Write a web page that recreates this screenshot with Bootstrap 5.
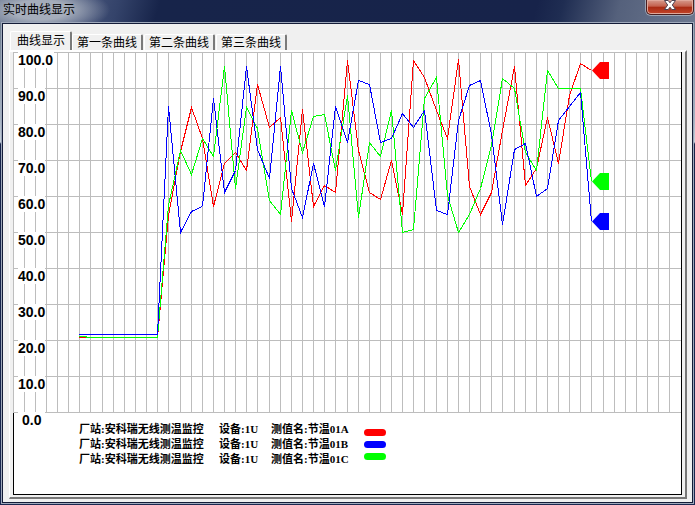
<!DOCTYPE html>
<html lang="zh-CN">
<head>
<meta charset="utf-8">
<meta name="viewport" content="width=device-width, initial-scale=1">
<title>实时曲线显示</title>
<link href="https://cdn.jsdelivr.net/npm/bootstrap@5.3.0/dist/css/bootstrap.min.css" rel="stylesheet">
<style>
body{font:12px/16px "Liberation Sans","Noto Sans CJK SC",sans-serif;color:#000;background:#17244a}
.win{background:linear-gradient(#5d6d80,#a9b5c4 120px,#c6d0da 142px,#17244a 144px,#1a2850)}
.titlebar{height:23px;padding-left:3px;background:
 radial-gradient(ellipse 70px 24px at 40px 10px,#a5adbb 40%,#a5adbb00 100%),
 linear-gradient(105deg,#5b6a86 0,#46547a 80px,#34436a 115px,#17244a 155px,#17234a 520px,#1f2d52 545px,#55617c 600px,#6c7890 100%)}
.titlebar h1{font-size:12px;line-height:20px}
.close-btn{width:48px;height:15px;margin-right:1px;border:1px solid #4b1f20;border-top:0;border-radius:0 0 5px 5px;
 background:linear-gradient(#d59a8c,#c4604c 45%,#a82a12 50%,#c2452b);box-shadow:inset 0 0 0 1px #e0a89a,0 0 0 1px #9da6b5}
.client{margin:0 2px 2px;padding:7px 5px 3px 6px;background:#f0f0f0;border:1px solid #141c38;box-shadow:0 0 0 1px #9fa9bb}
.tabs{padding-left:1px}
.tabs button{height:16px;padding:0 4px;border:0;border-top:1px solid #fff;border-left:1px solid #fff;border-right:2px solid #7a7a7a;
 border-radius:2px 2px 0 0;background:#f0f0f0;color:#000;line-height:16px;margin-right:1px}
.tabs button.active{height:19px;padding:0 5px 0 6px;line-height:17px;margin-right:0}
.sheet{border:2px solid #fff;border-left-width:1px;border-right:2px solid #777;border-bottom:2px solid #777;padding:0 3px 2px 3px;background:#f0f0f0}
.board{background:#fff;border-bottom:1px solid #000}
.plot{overflow:visible}
.plot text{font:bold 14px "Liberation Sans",sans-serif}
.legend{border-left:1px solid #000;border-right:1px solid #000;padding:9px 0 0 65px;
 font:bold 11px/15px "Liberation Serif","Noto Sans CJK SC",serif}
.legend .site{width:140px}.legend .device{width:52px}.legend .measure{width:93px}
.keys{row-gap:5px;padding-top:7px}
.pill{width:22px;height:7px;border-radius:4px}
.red{background:#f00}.blue{background:#00f}.green{background:#0f0}
</style>
<script src="https://cdn.jsdelivr.net/npm/bootstrap@5.3.0/dist/js/bootstrap.bundle.min.js"></script>
</head>
<body>
<main class="win min-vh-100 d-flex flex-column">
 <header class="titlebar d-flex justify-content-between align-items-start">
  <h1 class="m-0 fw-normal">实时曲线显示</h1>
  <button class="close-btn p-0 d-flex justify-content-center" type="button" aria-label="关闭">
   <svg width="14" height="12" viewBox="0 0 14 12"><path d="M1.500 .5h3.700L7 2.800 8.800.5h3.700L9.300 5l3.200 4.500H8.800L7 7.200 5.200 9.500H1.500L4.700 5z" fill="#fff" stroke="#4c4252"/></svg>
  </button>
 </header>
 <section class="client flex-grow-1 d-flex flex-column">
  <nav class="tabs d-flex align-items-end" role="tablist">
   <button class="active" role="tab" aria-selected="true" type="button">曲线显示</button>
   <button role="tab" type="button">第一条曲线</button>
   <button role="tab" type="button">第二条曲线</button>
   <button role="tab" type="button">第三条曲线</button>
  </nav>
  <div class="sheet flex-grow-1 d-flex flex-column">
   <div class="board flex-grow-1 d-flex flex-column">
    <svg class="plot w-100 d-block" viewBox="0 0 669 361" role="img" aria-label="实时曲线">
     <g id="grid" fill="none" stroke="#bdbdbd" shape-rendering="crispEdges"></g>
     <g id="scale"></g>
     <g id="curves" fill="none" shape-rendering="crispEdges"></g>
     <g id="markers"></g>
    </svg>
    <div class="legend flex-grow-1 d-flex align-items-start">
     <div>
      <div class="d-flex"><span class="site">厂站:安科瑞无线测温监控</span><span class="device">设备:1U</span><span class="measure">测值名:节温01A</span></div>
      <div class="d-flex"><span class="site">厂站:安科瑞无线测温监控</span><span class="device">设备:1U</span><span class="measure">测值名:节温01B</span></div>
      <div class="d-flex"><span class="site">厂站:安科瑞无线测温监控</span><span class="device">设备:1U</span><span class="measure">测值名:节温01C</span></div>
     </div>
     <div class="keys d-grid"><span class="pill red"></span><span class="pill blue"></span><span class="pill green"></span></div>
    </div>
   </div>
  </div>
 </section>
</main>
<script>
const px = i => Math.floor(i * 668 / 60) + 0.5;
let grid = '';
for (let i = 0; i < 60; i++) grid += `<path d="M${px(i)} 0V361"/>`;
grid += '<path d="M668.5 0V361" stroke="#000"/>';
for (let j = 0; j <= 10; j++) grid += `<path d="M0 ${j * 36 + 0.5}H668"/>`;
document.getElementById('grid').innerHTML = grid;

// Scale captions sit on white plates that interrupt the grid
let scale = '';
for (let j = 0; j <= 10; j++) {
  const x = j < 10 ? 5 : 9;
  scale += `<rect x="5" y="${j * 36}" width="${j ? 27 : 36}" height="16" fill="#fff"/><text x="${x}" y="${j * 36 + 13}">${(100 - j * 10).toFixed(1)}</text>`;
}
document.getElementById('scale').innerHTML = scale;

// Samples are vertical positions, one per grid column starting at column 13
const red = [285,163,99,55,86,154,111,100,118,32,75,65,169,57,154,133,140,8,98,140,147,108,162,8,25,58,86,7,134,162,140,78,14,133,116,65,111,43,11,18];
const green = [285,153,98,122,86,104,14,136,55,76,148,162,58,100,64,62,118,43,165,90,104,58,180,177,46,25,143,180,162,136,93,26,36,100,118,18,36,36,36,129];
const blue = [282,54,180,159,154,46,140,118,14,97,126,14,136,165,111,154,54,90,28,32,90,86,61,75,58,158,162,68,33,28,82,172,97,91,144,136,68,54,40,169];
const line = (start, data, color) =>
  `<polyline stroke="${color}" points="${start} ${data.map((y, i) => px(i + 13) + ',' + (y + 0.5)).join(' ')}"/>`;
document.getElementById('curves').innerHTML =
  line('66,285.5', red, '#f00') + line('66,284.5 73,284.5 73,285.5', green, '#0f0') + line('66,282.5', blue, '#00f');
document.getElementById('markers').innerHTML = [[18,'#f00'],[129,'#0f0'],[169,'#00f']]
  .map(([y, c]) => `<path d="M579 ${y + 0.5}l8-8.500h9v17h-9z" fill="${c}"/>`).join('');
</script>
</body>
</html>
